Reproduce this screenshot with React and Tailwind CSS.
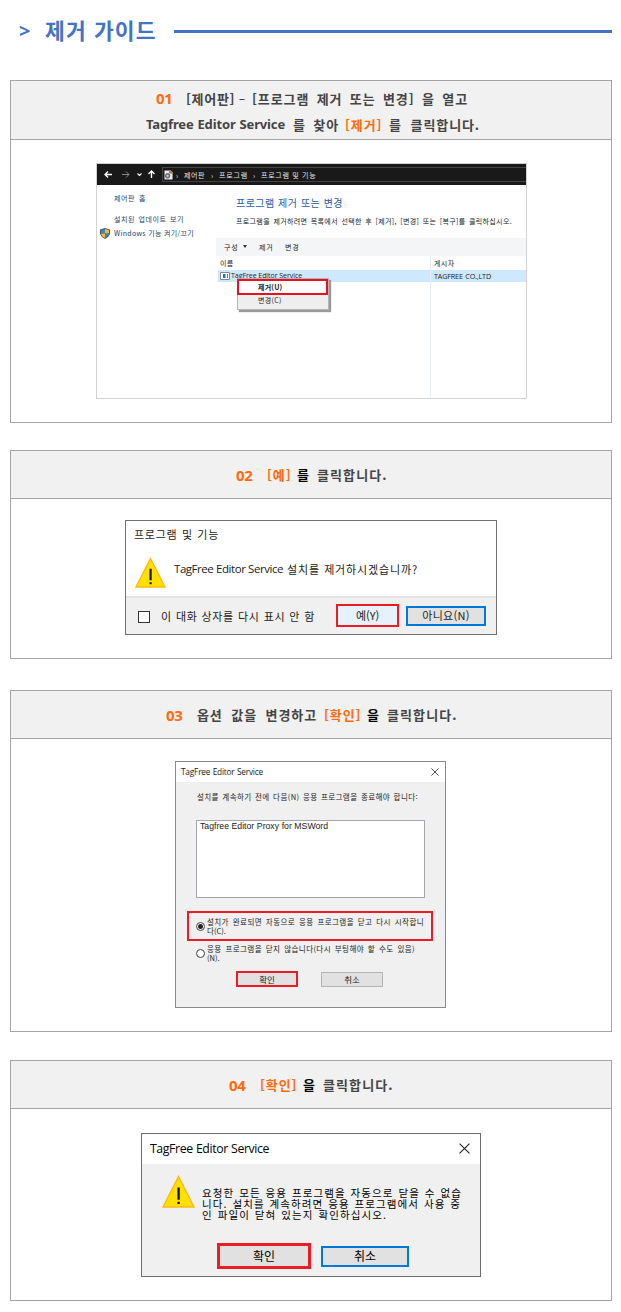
import React from "react";

// A single line of text, spread over the width given in its class name.
function Line({ className = "", children }) {
  return (
    <span className={"block shrink-0 whitespace-nowrap [text-align-last:justify] " + className}>
      {children}
    </span>
  );
}

function Step({ header, className, children }) {
  return (
    <section className={"ml-[10px] flex w-[602px] flex-col border border-[#a5a5a5] " + className}>
      <header className="flex shrink-0 flex-col justify-center border-b border-[#a5a5a5] bg-[#f1f1f1] text-[13px] font-bold tracking-[0.9px] text-[#444]">
        {header}
      </header>
      {children}
    </section>
  );
}

function Num({ children }) {
  return (
    <span className="w-[17px] shrink-0 font-['Noto_Sans'] text-[15px] font-bold tracking-[-0.3px] text-[#ff6a0d]">
      {children}
    </span>
  );
}

function Warning({ className }) {
  return (
    <svg viewBox="0 0 32 32" className={className}>
      <path d="M16 1.5 31 31H1Z" fill="#ffe000" stroke="#fdb913" strokeWidth="1.4" />
      <path d="M15 12h2.2v12H15zM15 26h2.2v2.2H15z" fill="#111" />
    </svg>
  );
}

function Close({ className }) {
  return (
    <svg viewBox="0 0 10 10" className={className} fill="none" stroke="#222" strokeWidth="1">
      <path d="M.5.5l9 9M9.500.5l-9 9" />
    </svg>
  );
}

function ProgramsWindow() {
  return (
    <div className="ml-[85px] mt-[23px] flex h-[236px] w-[431px] flex-col overflow-hidden border border-[#d2d2d2] bg-white text-[7px] leading-[10px] text-[#222]">
      <div className="flex h-[21px] shrink-0 items-center bg-[#191919] text-white">
        <svg viewBox="0 0 65 21" className="h-[21px] w-[65px] shrink-0" fill="none" stroke="#fff" strokeWidth="1.3">
          <path d="M15 10.500H8M11 7.500 8 10.500l3 3" />
          <path d="M25 10.500h7M29 7.500l3 3-3 3" stroke="#888" strokeWidth="1" />
          <path d="M40.500 9.500l2 2 2-2" strokeWidth="1.100" />
          <path d="M54.500 14V7M51.500 10l3-3 3 3" />
        </svg>
        <div className="flex h-[15px] flex-1 items-center border-y border-l border-[#444] text-[#e8e8e8]">
          <svg viewBox="0 0 10 11" className="ml-px h-[11px] w-[9px] shrink-0">
            <path d="M.5 1h7l2 2v8h-9Z" fill="#e9e9e9" />
            <path d="M5.500 1 9 2v3L5.500 4Z" fill="#c7763b" />
            <circle cx="4" cy="7" r="2.500" fill="#8a9aa8" stroke="#333" strokeWidth=".8" />
            <circle cx="4" cy="7" r=".8" fill="#fff" />
          </svg>
          <span className="ml-[3px] w-[8px]">›</span>
          <span className="w-[27px] tracking-[0.6px]">제어판</span>
          <span className="w-[8px]">›</span>
          <span className="w-[34px] tracking-[0.8px]">프로그램</span>
          <span className="w-[8px]">›</span>
          <Line className="w-[55px] tracking-[0.7px]">프로그램 및 기능</Line>
        </div>
      </div>
      <div className="flex flex-1">
        <div className="w-[119px] shrink-0 text-[#283f6b]">
          <Line className="ml-[17px] mt-[8px] w-[32px] tracking-[0.5px]">제어판 홈</Line>
          <Line className="ml-[17px] mt-[11px] w-[70px] tracking-[0.6px]">설치된 업데이트 보기</Line>
          <div className="mt-[4px] flex items-center">
            <svg viewBox="0 0 10 11" className="ml-[3px] h-[11px] w-[10px] shrink-0">
              <path d="M5 0 10 1.500V6Q9 9 5 11 1 9 0 6V1.500Z" fill="#555" />
              <path d="M5 1V5.500H1V2Z" fill="#2f86cf" />
              <path d="M5 1 9 2v3.500H5Z" fill="#f6b92c" />
              <path d="M1 5.500h4V10Q1.500 8.500 1 5.500Z" fill="#f6b92c" />
              <path d="M9 5.500H5V10Q8.500 8.500 9 5.500Z" fill="#2f86cf" />
            </svg>
            <Line className="-mt-px ml-[4px] w-[80px] tracking-[0.3px]">Windows 기능 켜기/끄기</Line>
          </div>
        </div>
        <div className="flex flex-1 flex-col">
          <Line className="ml-[20px] mt-[11px] w-[107px] text-[10px] leading-[14px] tracking-[0.45px] text-[#2c5aa8]">
            프로그램 제거 또는 변경
          </Line>
          <Line className="ml-[20px] mt-[6px] w-[276px] tracking-[0.35px]">
            프로그램을 제거하려면 목록에서 선택한 후 [제거], [변경] 또는 [복구]를 클릭하십시오.
          </Line>
          <div className="mt-[12px] flex h-[18px] items-center bg-[#f4f5f7] pb-px">
            <span className="ml-[8px] w-[15px] tracking-[0.8px]">구성</span>
            <span className="ml-[4px] h-0 w-0 border-x-[2.5px] border-t-[3px] border-x-transparent border-t-[#1d3557]" />
            <span className="ml-[12px] w-[15px] tracking-[0.8px]">제거</span>
            <span className="ml-[11px] tracking-[0.8px]">변경</span>
          </div>
          <div className="flex flex-1">
            <div className="relative w-[215px] border-r border-[#e4eef8]">
              <div className="ml-[4px] mt-[2px] leading-[11px] tracking-[0.4px]">이름</div>
              <div className="ml-[2px] mt-px flex h-[12px] items-center bg-[#cde8ff]">
                <svg viewBox="0 0 10 8" className="ml-[2px] h-[8px] w-[10px] shrink-0">
                  <path d="M.5.5h9v7h-9Z" fill="#fff" stroke="#888" />
                  <path d="M3 2h2.500v4H3Z" fill="#1877cf" />
                  <path d="M7 2h1v4H7z" fill="#777" />
                </svg>
                <Line className="ml-px w-[71px] font-['Open_Sans'] text-[7px] tracking-[-0.05px]">TagFree Editor Service</Line>
              </div>
              <div className="absolute left-[21px] top-[22px] h-[32px] w-[92px] border border-[#b5b5b5] bg-[#eee] shadow-[2px_2px_1px_#999]">
                <div className="-ml-px flex h-[16px] w-[91px] items-center border-2 border-[#e81123] bg-white pb-px pl-[19px] font-bold tracking-[0.2px]">
                  제거(U)
                </div>
                <div className="pl-[20px] leading-[11px] tracking-[0.3px]">변경(C)</div>
              </div>
            </div>
            <div className="flex-1">
              <div className="ml-[3px] mt-[2px] leading-[11px] tracking-[0.4px]">게시자</div>
              <div className="mt-px flex h-[12px] items-center bg-[#cde8ff]">
                <Line className="ml-[3px] w-[57px] font-['Open_Sans'] text-[7.2px] tracking-[-0.15px]">TAGFREE CO.,LTD</Line>
              </div>
            </div>
          </div>
        </div>
      </div>
    </div>
  );
}

function ConfirmDialog() {
  return (
    <div className="ml-[114px] mt-[21px] flex h-[115px] w-[372px] flex-col border border-[#707073] bg-white text-[11px] text-[#222]">
      <Line className="ml-[8px] mt-[5px] w-[85px] leading-[16px] tracking-[0.7px]">프로그램 및 기능</Line>
      <div className="flex">
        <Warning className="ml-[9px] mt-[15px] h-[31px] w-[31px]" />
        <span className="ml-[8px] mt-[19px] flex leading-[16px]">
          <Line className="w-[109px] font-['Open_Sans'] text-[11.5px] tracking-[-0.45px]">TagFree Editor Service</Line>
          <Line className="ml-[4px] w-[131px] tracking-[0.85px]">설치를 제거하시겠습니까?</Line>
        </span>
      </div>
      <div className="mt-auto flex h-[38px] items-center border-t-2 border-[#e3e3e3] bg-[#f0f0f0]">
        <span className="ml-[12px] mt-px h-[12px] w-[12px] border border-[#333] bg-white" />
        <Line className="ml-[11px] mt-px w-[154px] tracking-[0.6px]">이 대화 상자를 다시 표시 안 함</Line>
        <span className="-mt-px ml-[21px] flex h-[23px] w-[63px] items-center justify-center border-2 border-[#ed1c24] bg-[#e5f1fb] pb-px tracking-[-0.1px]">
          예(Y)
        </span>
        <span className="-mt-px ml-[7px] flex h-[20px] w-[80px] items-center justify-center border-2 border-[#0078d7] bg-[#e1e1e1] pb-px tracking-[0.3px]">
          아니요(N)
        </span>
      </div>
    </div>
  );
}

function OptionsDialog() {
  return (
    <div className="ml-[164px] mt-[22px] flex h-[247px] w-[271px] flex-col border border-[#8a8a8a] bg-[#f0f0f0] text-[7.5px] leading-[8px] text-[#222]">
      <div className="flex h-[20px] shrink-0 items-center justify-between bg-white pl-[5px] pr-[6px]">
        <Line className="w-[82px] font-['Open_Sans'] text-[8.3px] tracking-[-0.2px]">TagFree Editor Service</Line>
        <Close className="h-[8px] w-[8px]" />
      </div>
      <Line className="ml-[21px] mt-[11px] w-[221px] tracking-[0.4px]">
        설치를 계속하기 전에 다음(N) 응용 프로그램을 종료해야 합니다:
      </Line>
      <div className="ml-[20px] mt-[19px] h-[78px] w-[229px] shrink-0 border border-[#a3a6ad] bg-white pl-[3px] pt-px font-['Liberation_Sans'] text-[8.7px] leading-[9px]">
        <Line className="w-[128px]">Tagfree Editor Proxy for MSWord</Line>
      </div>
      <div className="ml-[11px] mt-[13px] flex h-[30px] w-[246px] shrink-0 items-center border-2 border-[#ed1c24]">
        <span className="ml-[7px] flex h-[9px] w-[9px] items-center justify-center rounded-full border border-[#444] bg-white">
          <span className="h-[5px] w-[5px] rounded-full bg-[#222]" />
        </span>
        <span className="ml-[2px]">
          <Line className="w-[217px] tracking-[0.4px]">설치가 완료되면 자동으로 응용 프로그램을 닫고 다시 시작합니</Line>
          <span className="mt-px block leading-[8px]">다(C).</span>
        </span>
      </div>
      <div className="ml-[20px] mt-[4px] flex items-center">
        <span className="h-[9px] w-[9px] rounded-full border border-[#444] bg-white" />
        <span className="ml-[2px]">
          <Line className="w-[208px] tracking-[0.4px]">응용 프로그램을 닫지 않습니다(다시 부팅해야 할 수도 있음)</Line>
          <span className="mt-px block leading-[8px]">(N).</span>
        </span>
      </div>
      <div className="ml-[60px] mt-[9px] flex items-center text-[8.5px]">
        <span className="flex h-[16px] w-[62px] items-center justify-center border-2 border-[#ed1c24] bg-[#e1e1e1]">확인</span>
        <span className="ml-[23px] flex h-[15px] w-[62px] items-center justify-center border border-[#b4b4b4] bg-[#e1e1e1]">취소</span>
      </div>
    </div>
  );
}

function FinishDialog() {
  return (
    <div className="ml-[130px] mt-[24px] flex h-[144px] w-[340px] flex-col border border-[#6d6d6d] bg-[#f0f0f0] text-[12px] text-black">
      <div className="flex h-[30px] shrink-0 items-center justify-between bg-white pl-[8px] pr-[10px]">
        <Line className="w-[119px] font-['Open_Sans'] text-[12.3px] tracking-[-0.4px]">TagFree Editor Service</Line>
        <Close className="mb-[2px] h-[11px] w-[11px]" />
      </div>
      <div className="flex">
        <Warning className="ml-[20px] mt-[11px] h-[33px] w-[33px]" />
        <div className="ml-[7px] mt-[23px] text-[10.5px] leading-[11px] tracking-[1.1px]">
          <Line className="w-[260px]">요청한 모든 응용 프로그램을 자동으로 닫을 수 없습</Line>
          <Line className="w-[259px]">니다. 설치를 계속하려면 응용 프로그램에서 사용 중</Line>
          <Line className="w-[185px]">인 파일이 닫혀 있는지 확인하십시오.</Line>
        </div>
      </div>
      <div className="mb-[7px] ml-[75px] mt-auto flex items-center">
        <span className="flex h-[26px] w-[94px] items-center justify-center border-3 border-[#ed1c24] bg-[#e1e1e1] pb-px">확인</span>
        <span className="ml-[10px] flex h-[21px] w-[88px] items-center justify-center border-2 border-[#0078d7] bg-[#e1e1e1] pb-px">취소</span>
      </div>
    </div>
  );
}

export default function App() {
  return (
    <main lang="ko" className="h-[1312px] w-[621px] overflow-hidden bg-white font-['Noto_Sans_CJK_KR',sans-serif]">
      <div className="flex h-[62px] items-center text-[#4472c4]">
        <span className="ml-[19px] w-[26px] font-['Noto_Sans'] text-[20px] font-bold">&gt;</span>
        <h1 className="mb-[2px] w-[129px] whitespace-nowrap text-[21.5px] font-bold tracking-[1.1px]">제거 가이드</h1>
        <span className="h-[3px] w-[438px] bg-[#4472c4]" />
      </div>

      <Step
        className="mt-[18px] h-[343px]"
        header={
          <div className="flex h-[58px] flex-col justify-center pt-[3px]">
            <div className="ml-[145px] flex h-[26px] items-center">
              <Num>01</Num>
              <span className="ml-[13px] w-[50px] whitespace-nowrap tracking-[0.7px]">[제어판]</span>
              <span className="ml-[3px] w-[10px] text-[11px]">–</span>
              <Line className="ml-[3px] w-[216px]">[프로그램 제거 또는 변경] 을 열고</Line>
            </div>
            <div className="ml-[135px] flex h-[26px] items-center">
              <Line className="w-[139px] font-['Noto_Sans'] font-bold tracking-[-0.15px]">Tagfree Editor Service</Line>
              <Line className="ml-[8px] w-[46px]">를 찾아</Line>
              <span className="ml-[6px] w-[37px] whitespace-nowrap text-[#ff6a0d]">[제거]</span>
              <Line className="ml-[7px] w-[91px]">를 클릭합니다.</Line>
            </div>
          </div>
        }
      >
        <ProgramsWindow />
      </Step>

      <Step
        className="mt-[27px] h-[209px]"
        header={
          <div className="ml-[225px] flex h-[47px] items-center pt-px">
            <Num>02</Num>
            <span className="ml-[14px] w-[23px] whitespace-nowrap text-[#ff6a0d]">[예]</span>
            <span className="ml-[7px] w-[20px] text-black">를</span>
            <span className="tracking-[1.1px]">클릭합니다.</span>
          </div>
        }
      >
        <ConfirmDialog />
      </Step>

      <Step
        className="mt-[31px] h-[342px]"
        header={
          <div className="ml-[155px] flex h-[47px] items-center pt-px">
            <Num>03</Num>
            <Line className="ml-[14px] w-[120px]">옵션 값을 변경하고</Line>
            <span className="ml-[7px] w-[37px] whitespace-nowrap text-[#ff6a0d]">[확인]</span>
            <span className="ml-[6px] w-[20px] text-black">을</span>
            <span className="tracking-[1.1px]">클릭합니다.</span>
          </div>
        }
      >
        <OptionsDialog />
      </Step>

      <Step
        className="mt-[28px] h-[241px]"
        header={
          <div className="ml-[218px] flex h-[47px] items-center pt-px">
            <Num>04</Num>
            <span className="ml-[14px] w-[37px] whitespace-nowrap text-[#ff6a0d]">[확인]</span>
            <span className="ml-[6px] w-[20px] text-black">을</span>
            <span className="tracking-[1.1px]">클릭합니다.</span>
          </div>
        }
      >
        <FinishDialog />
      </Step>
    </main>
  );
}
